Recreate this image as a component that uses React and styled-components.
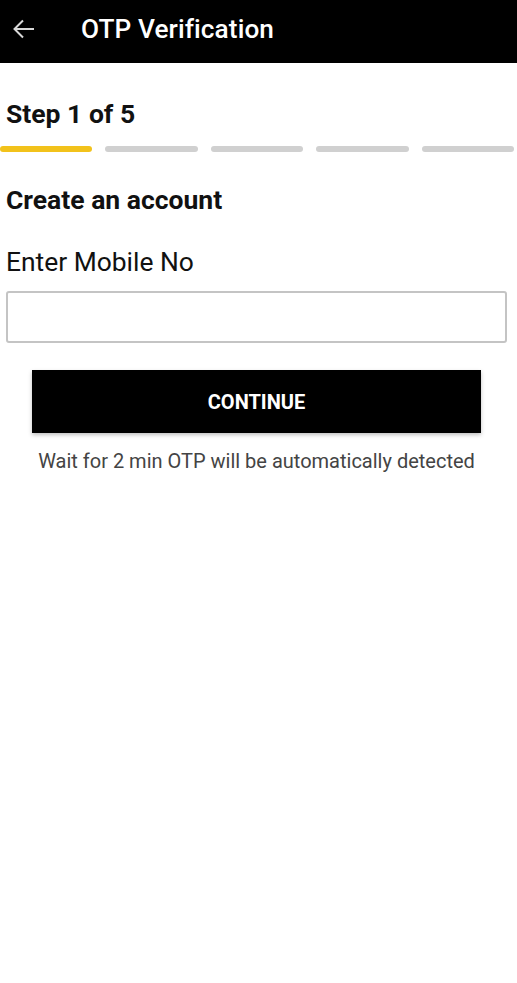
import React from "react";
import styled, { createGlobalStyle } from "styled-components";

const GlobalStyle = createGlobalStyle`
  body {
    margin: 0;
    background: #fff;
    font-family: Roboto, "Liberation Sans", sans-serif;
  }
`;

const Page = styled.div`
  width: 517px;
  min-height: 983px;
  background: #fff;
`;

const Header = styled.div`
  display: flex;
  align-items: center;
  height: 63px;
  padding-bottom: 6px;
  box-sizing: border-box;
  background: #000;
  color: #fff;
  padding-left: 12px;
`;

const BackBtn = styled.button`
  display: flex;
  align-items: center;
  justify-content: center;
  border: unset;
  background: transparent;
  padding: 0;
  width: 24px;
  height: 24px;
  margin-right: 45px;
  outline: unset;
`;

const Title = styled.span`
  font-size: 26.2px;
  font-weight: 500;
  letter-spacing: 0.1px;
`;

const Body = styled.div`
  padding: 36px 0 0;
`;

const StepText = styled.div`
  font-size: 26.5px;
  font-weight: bold;
  color: #111;
  padding-left: 6px;
  line-height: 30px;
`;

const Progress = styled.div`
  display: flex;
  gap: 13px;
  width: 514px;
  margin-top: 17px;
`;

const Bar = styled.div`
  flex: 1;
  height: 6px;
  border-radius: 3px;
  background: ${(p) => (p.active ? "#f2c21b" : "#d0d0d0")};
`;

const Section = styled.div`
  padding: 0 6px;
  margin-top: 33px;
`;

const Heading = styled.div`
  font-size: 26.5px;
  font-weight: bold;
  color: #111;
  line-height: 30px;
`;

const Label = styled.div`
  font-size: 26.4px;
  color: #111;
  line-height: 30px;
  margin-top: 32px;
`;

const Input = styled.input`
  display: block;
  box-sizing: border-box;
  width: 501px;
  height: 52px;
  margin-top: 14px;
  border: 2px solid #c4c4c4;
  border-radius: 3px;
  font-size: 20px;
  padding: 0 10px;
  outline: unset;
`;

const ContinueBtn = styled.button`
  display: block;
  width: 449px;
  height: 63px;
  margin: 27px auto 0 32px;
  border: unset;
  background: #000;
  color: #fff;
  font-family: Roboto, "Liberation Sans", sans-serif;
  font-size: 20px;
  font-weight: bold;
  box-shadow: 0 2px 4px rgba(0, 0, 0, 0.25);
`;

const Hint = styled.div`
  width: 513px;
  text-align: center;
  font-size: 20px;
  color: #444;
  margin-top: 16px;
`;

const steps = [true, false, false, false, false];

const App = () => {
  return (
    <Page>
      <GlobalStyle />
      <Header>
        <BackBtn>
          <svg width="22" height="20" viewBox="0 0 22 20">
            <path
              d="M21 10H2M10 1.5L1.5 10l8.5 8.5"
              fill="none"
              stroke="#d8d8d8"
              strokeWidth="2"
            />
          </svg>
        </BackBtn>
        <Title>OTP Verification</Title>
      </Header>
      <Body>
        <StepText>Step 1 of 5</StepText>
        <Progress>
          {steps.map((s, i) => (
            <Bar key={i} active={s} />
          ))}
        </Progress>
        <Section>
          <Heading>Create an account</Heading>
          <Label>Enter Mobile No</Label>
          <Input type="tel" />
        </Section>
        <ContinueBtn>CONTINUE</ContinueBtn>
        <Hint>Wait for 2 min OTP will be automatically detected</Hint>
      </Body>
    </Page>
  );
};

export default App;
